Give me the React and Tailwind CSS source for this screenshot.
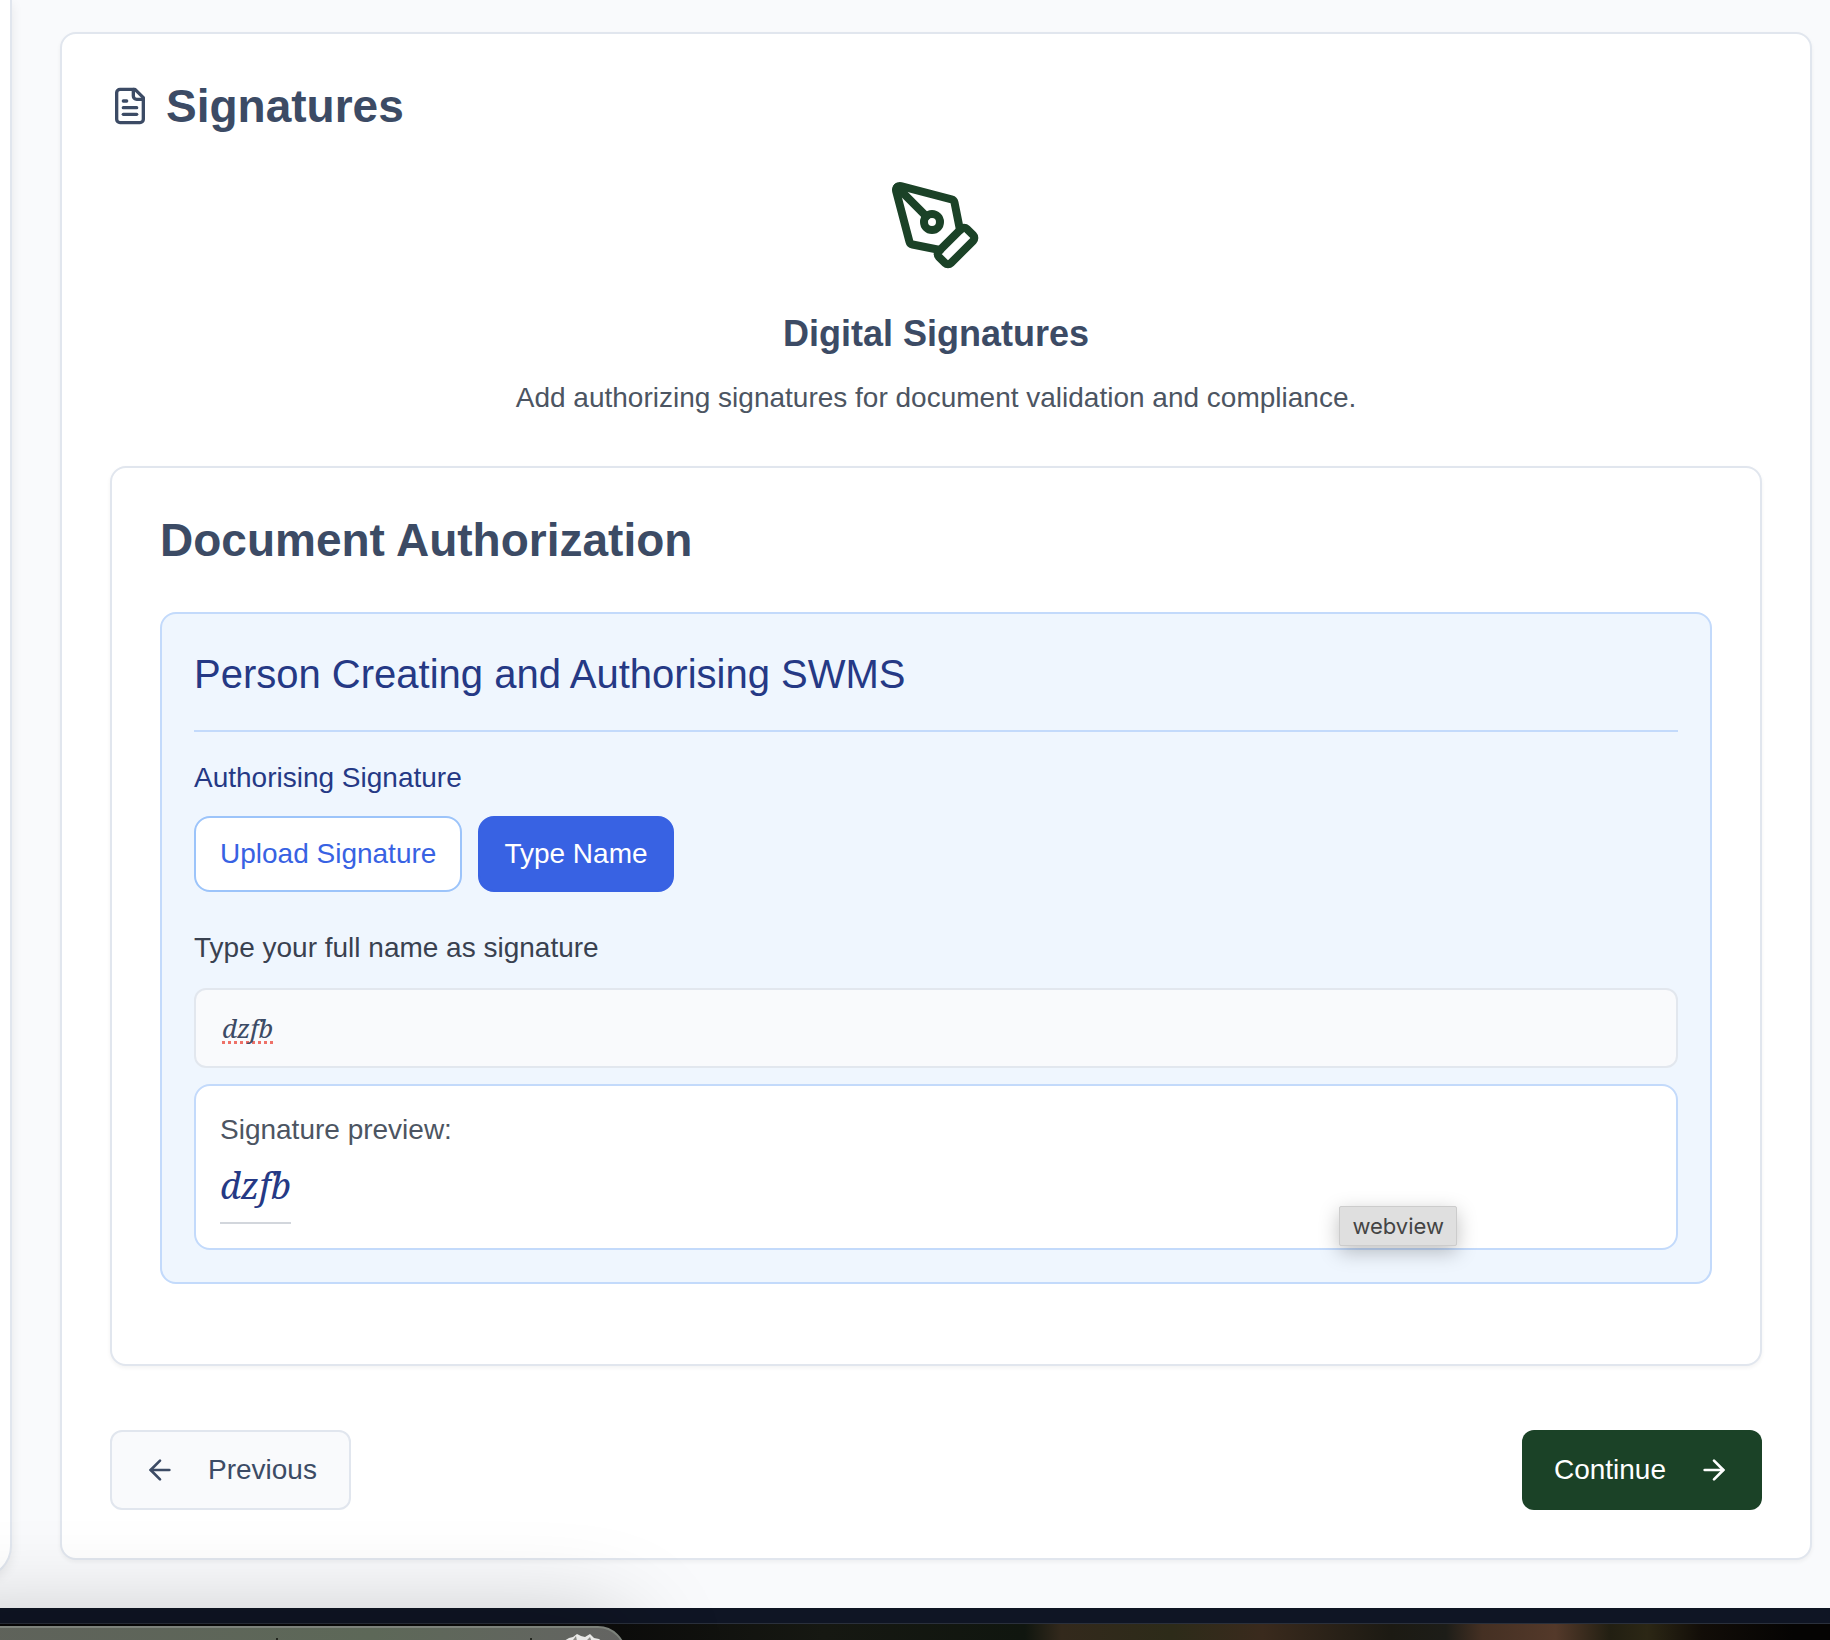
import React, { useState } from "react";
import { PenTool, ArrowLeft, ArrowRight } from "lucide-react";

function FileIcon() {
  return (
    <svg
      viewBox="0 0 24 24"
      className="size-10 shrink-0"
      fill="none"
      stroke="currentColor"
      strokeWidth="2"
      strokeLinecap="round"
      strokeLinejoin="round"
      aria-hidden="true"
    >
      <path d="M15 2H6a2 2 0 0 0-2 2v16a2 2 0 0 0 2 2h12a2 2 0 0 0 2-2V7Z" />
      <path d="M14 2v4a2 2 0 0 0 2 2h4" />
      <path d="M10 9H8" />
      <path d="M16 13H8" />
      <path d="M16 17H8" />
    </svg>
  );
}

function SignaturePanel() {
  const [name, setName] = useState("dzfb");
  return (
    <section className="rounded-2xl border-2 border-[#c3dafb] bg-[#eff6fe] p-8">
      <h3 className="border-b-2 border-[#c3dafb] pb-7 text-[40px] leading-14 text-[#253985]">
        Person Creating and Authorising SWMS
      </h3>
      <p className="mt-8 text-[28px] leading-7 text-[#253985]">Authorising Signature</p>
      <div className="mt-6 flex gap-4">
        <button
          type="button"
          className="rounded-2xl border-2 border-[#9cc4fa] bg-white px-6 py-4 text-[28px] leading-10 text-[#3862e3]"
        >
          Upload Signature
        </button>
        <button
          type="button"
          className="rounded-2xl border-2 border-[#3862e3] bg-[#3862e3] px-6 py-4 text-[28px] leading-10 text-white"
        >
          Type Name
        </button>
      </div>
      <label htmlFor="signature" className="mt-9 mb-5 block text-[28px] leading-10 text-[#394150]">
        Type your full name as signature
      </label>
      <input
        id="signature"
        type="text"
        spellCheck={false}
        value={name}
        onChange={(e) => setName(e.target.value)}
        className="block h-20 w-full rounded-xl border-2 border-[#e2e7ee] bg-[#f9fafc] px-[26px] font-['Noto_Serif','Liberation_Serif',serif] text-[26px] text-[#3c4b65] italic underline decoration-[#ee7168] decoration-dotted decoration-3 underline-offset-3 outline-none [text-decoration-skip-ink:none]"
      />
      <div className="relative mt-4 rounded-2xl border-2 border-[#c3dafb] bg-white p-6">
        <p className="text-[28px] leading-10 text-[#4c5562]">Signature preview:</p>
        <p className="mt-2 w-fit border-b-2 border-[#d2d6dc] pb-2 font-['Noto_Serif','Liberation_Serif',serif] text-4xl leading-14 text-[#253985] italic">
          {name}
        </p>
        <div
          role="tooltip"
          className="absolute right-[219px] bottom-0.5 rounded-xs border border-[#cccccc] bg-[#dfdfdf] px-3 py-1 font-['Inter',sans-serif] text-[22px] leading-[30px] text-[#444444] shadow-[0_6px_20px_rgba(0,0,0,0.25)]"
        >
          webview
        </div>
      </div>
    </section>
  );
}

function SignaturesCard() {
  return (
    <main className="min-w-0 flex-1 rounded-2xl border-2 border-[#e1e6ee] bg-white p-12 shadow-[0_2px_4px_rgba(0,0,0,0.05)]">
      <h1 className="flex items-center gap-4 text-[46px] leading-12 font-bold text-[#3c4b65]">
        <FileIcon />
        Signatures
      </h1>

      <div className="mt-12 flex flex-col items-center text-center">
        <PenTool className="size-24 text-[#1b4227]" aria-hidden="true" />
        <h2 className="mt-8 text-4xl leading-14 font-bold text-[#3c4b65]">Digital Signatures</h2>
        <p className="mt-4 text-[28px] leading-10 text-[#4c5562]">
          Add authorizing signatures for document validation and compliance.
        </p>
      </div>

      <section className="mt-12 rounded-2xl border-2 border-[#e1e6ee] bg-white px-12 pt-12 pb-20 shadow-[0_2px_4px_rgba(0,0,0,0.05)]">
        <h2 className="mb-12 text-[46px] leading-12 font-bold text-[#3c4b65]">
          Document Authorization
        </h2>
        <SignaturePanel />
      </section>

      <div className="mt-16 flex justify-between">
        <button
          type="button"
          className="flex h-20 items-center gap-8 rounded-xl border-2 border-[#e1e6ee] bg-[#f9fafc] px-8 text-[28px] text-[#3c4b65]"
        >
          <ArrowLeft className="size-8" aria-hidden="true" />
          Previous
        </button>
        <button
          type="button"
          className="flex h-20 items-center gap-8 rounded-xl bg-[#1b4227] px-8 text-[28px] text-white"
        >
          Continue
          <ArrowRight className="size-8" aria-hidden="true" />
        </button>
      </div>
    </main>
  );
}

function Dock() {
  return (
    <div className="absolute top-[18px] -left-24 h-24 w-[722px] rounded-[28px] border-2 border-[#7d827b] bg-linear-to-r from-[#5f615b] via-[#5d6858] via-65% to-[#646462] shadow-[0_0_100px_rgba(0,0,0,0.26)]">
      <svg viewBox="0 0 718 92" className="size-full" aria-hidden="true">
        <rect x="370" y="10" width="2" height="40" fill="#23261f" />
        <rect x="624" y="10" width="2" height="40" fill="#23261f" />
        <path
          d="M658 13l5-3 4-1 4-3 4 2 4 1 5-3 4 4 5 1 5 4v20h-40z"
          fill="#e9e9e7"
        />
        <path d="M667 12l3-4 1 5zM681 12l3-3 2 5z" fill="#8b8b86" />
      </svg>
    </div>
  );
}

export default function App() {
  return (
    <div className="flex h-screen flex-col overflow-hidden bg-[#f9fafc] font-['Liberation_Sans',Arial,sans-serif]">
      <div className="flex flex-1 gap-12 pr-[18px] pb-12">
        <aside className="-ml-[52px] mb-[-18px] w-16 shrink-0 rounded-br-[32px] border-r-2 border-b-2 border-[#e1e6ee] bg-white shadow-[0_4px_12px_rgba(0,0,0,0.08)]" />
        <div className="flex min-w-0 flex-1 pt-8">
          <SignaturesCard />
        </div>
      </div>
      <footer className="relative shrink-0">
        <div className="h-4 border-b border-[#2a303c] bg-[#0f1524]" />
        <div className="h-4 bg-[linear-gradient(90deg,#060606_0%,#0d0d0c_34%,#161812_45%,#10160f_56%,#33291c_58%,#2d2b19_64%,#3a2a1d_69%,#1c1a13_76%,#1d1d18_79%,#453023_81%,#54392a_85%,#221f12_88%,#2c2715_90%,#120d08_93%,#050403_98%)]" />
        <Dock />
      </footer>
    </div>
  );
}
